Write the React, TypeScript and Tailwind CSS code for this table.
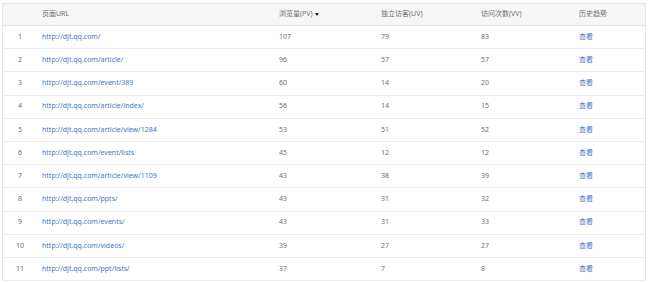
import React from "react";

const rows: [number, string, number, number, number][] = [
  [1, "http://djt.qq.com/", 107, 79, 83],
  [2, "http://djt.qq.com/article/", 96, 57, 57],
  [3, "http://djt.qq.com/event/389", 60, 14, 20],
  [4, "http://djt.qq.com/article/index/", 56, 14, 15],
  [5, "http://djt.qq.com/article/view/1284", 53, 51, 52],
  [6, "http://djt.qq.com/event/lists", 45, 12, 12],
  [7, "http://djt.qq.com/article/view/1109", 43, 38, 39],
  [8, "http://djt.qq.com/ppts/", 43, 31, 32],
  [9, "http://djt.qq.com/events/", 43, 31, 33],
  [10, "http://djt.qq.com/videos/", 39, 27, 27],
  [11, "http://djt.qq.com/ppt/lists/", 37, 7, 8],
];

const grid = "grid grid-cols-[34px_237px_102px_100px_98px_1fr] items-center";

export default function App() {
  return (
    <div
      className="w-[649px] h-[283px] overflow-hidden bg-white pt-[3px] pl-[2px]"
      style={{ fontFamily: '"Noto Sans", "Noto Sans CJK SC", sans-serif' }}
    >
      <div className="w-[644px] border-l border-r border-t border-[#e6e6e6] text-[7px] text-[#6e6e6e]">
        <div className={`${grid} h-[22px] bg-[#f6f6f6] border-b border-[#e4e4e4]`}>
          <div></div>
          <div className="pl-[5px]">页面URL</div>
          <div className="pl-[5px] flex items-center">
            浏览量(PV)
            <span className="ml-[2px] inline-block w-0 h-0 border-l-[2.5px] border-r-[2.5px] border-t-[3px] border-l-transparent border-r-transparent border-t-[#222]"></span>
          </div>
          <div className="pl-[5px]">独立访客(UV)</div>
          <div className="pl-[5px]">访问次数(VV)</div>
          <div className="pl-[5px]">历史趋势</div>
        </div>
        {rows.map(([n, url, pv, uv, vv]) => (
          <div key={n} className={`${grid} h-[23.2px] border-b border-[#ececec]`}>
            <div className="text-center">{n}</div>
            <div className="pl-[5px] text-[#4676c8]">{url}</div>
            <div className="pl-[5px]">{pv}</div>
            <div className="pl-[5px]">{uv}</div>
            <div className="pl-[5px]">{vv}</div>
            <div className="pl-[5px] text-[#4676c8]">查看</div>
          </div>
        ))}
      </div>
    </div>
  );
}
